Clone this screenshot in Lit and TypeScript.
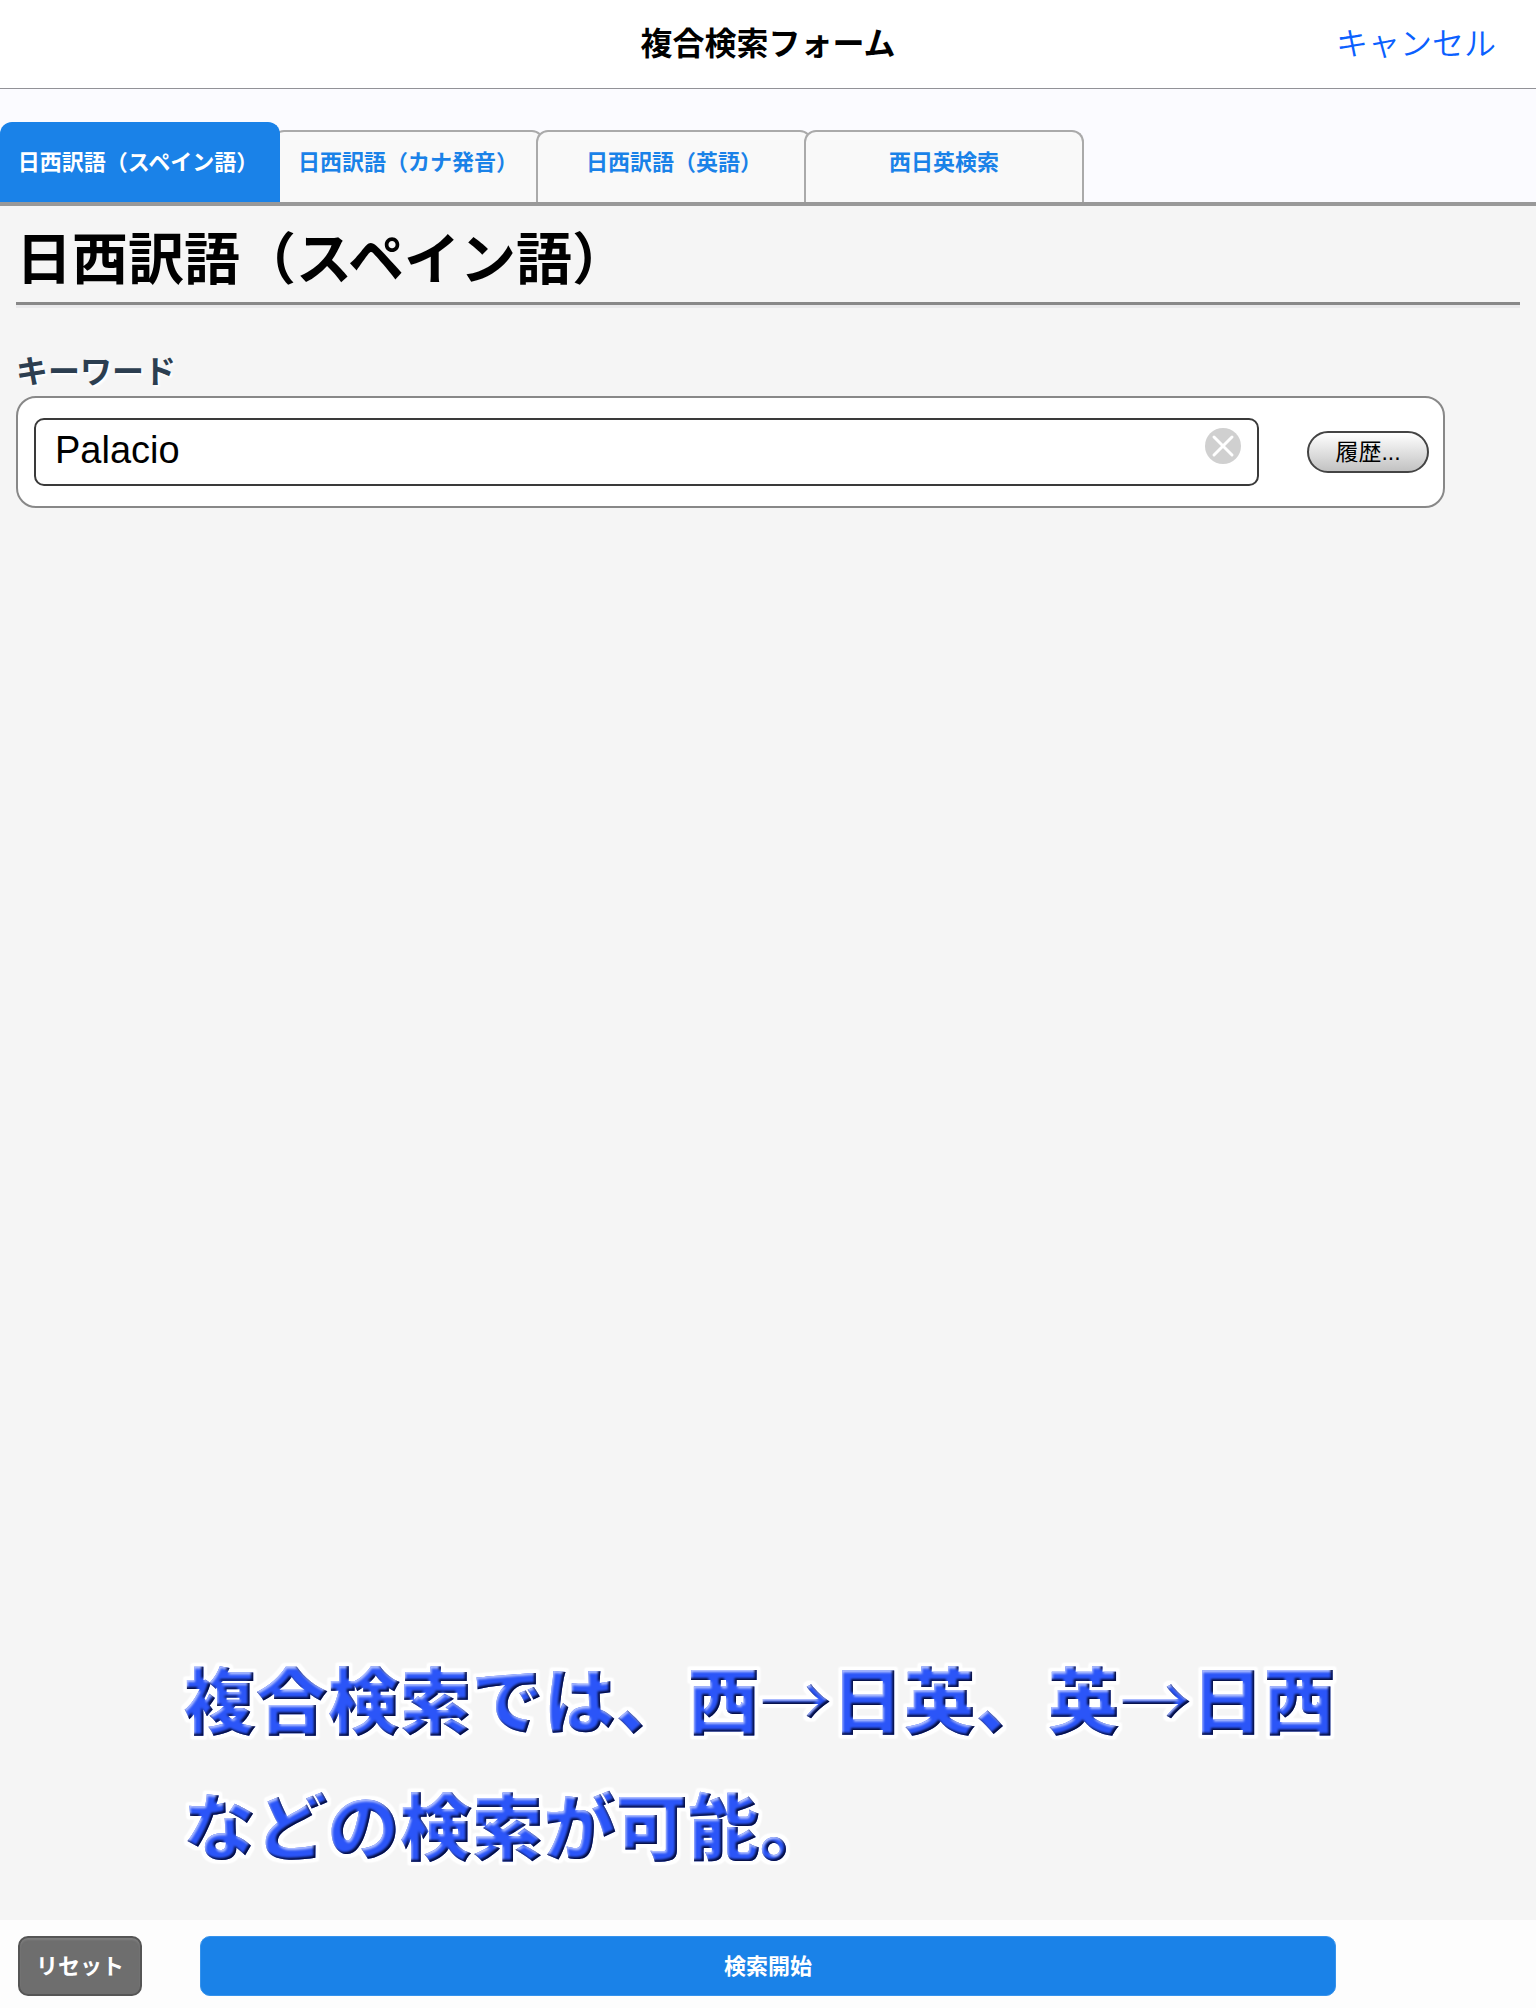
import { LitElement, html, css } from "lit";
import { customElement, state } from "lit/decorators.js";

interface Tab {
  label: string;
  size: string;
}

const TABS: Tab[] = [
  { label: "日西訳語（スペイン語）", size: "first" },
  { label: "日西訳語（カナ発音）", size: "second" },
  { label: "日西訳語（英語）", size: "third" },
  { label: "西日英検索", size: "fourth" },
];

@customElement("app-root")
export class AppRoot extends LitElement {
  @state() private active = 0;
  @state() private keyword = "Palacio";

  static styles = css`
    :host {
      display: flex;
      flex-direction: column;
      min-height: 100vh;
      background: #f5f5f5;
      color: #000;
      font-family: "Liberation Sans", "Noto Sans CJK JP", sans-serif;
    }
    * {
      box-sizing: border-box;
    }
    button {
      font-family: inherit;
      margin: 0;
      cursor: pointer;
    }
    .bar {
      display: grid;
      grid-template-columns: 1fr auto 1fr;
      align-items: center;
      height: 89px;
      padding: 0 40px;
      background: #fff;
      border-bottom: 1px solid #929297;
    }
    .bar-title {
      grid-column: 2;
      margin: 0;
      font-size: 32px;
      line-height: 48px;
      font-weight: 600;
    }
    .cancel {
      justify-self: end;
      padding: 0;
      border: 0;
      background: none;
      color: #0a60ff;
      font-size: 32px;
      line-height: 48px;
      font-weight: 350;
    }
    .tabs {
      display: flex;
      align-items: flex-end;
      height: 117px;
      background: #fbfbff;
      border-bottom: 4px solid #999;
    }
    .tab {
      height: 72px;
      margin-left: -8px;
      padding: 0 0 8px;
      border: 2px solid #aaa;
      border-bottom: 0;
      border-radius: 12px 12px 0 0;
      background: #f9f9f9;
      color: #1a82e8;
      font-size: 22px;
      line-height: 32px;
      font-weight: 600;
      white-space: nowrap;
    }
    .tab.first {
      width: 280px;
      margin-left: 0;
      padding-right: 4px;
    }
    .tab.second {
      width: 272px;
    }
    .tab.third {
      width: 276px;
    }
    .tab.fourth {
      width: 280px;
    }
    .tab.active {
      position: relative;
      height: 80px;
      padding-bottom: 0;
      border-color: #1a82e8;
      background: #1a82e8;
      color: #fff;
    }
    .content {
      flex: 1;
      display: flex;
      flex-direction: column;
      padding: 10px 16px 28px;
    }
    .heading {
      margin: 0;
      height: 89px;
      border-bottom: 3px solid #888;
      box-shadow: 0 3px 0 #e9e9eb;
      font-size: 56px;
      line-height: 88px;
      font-weight: 600;
    }
    .label {
      margin-top: 43px;
      font-size: 32px;
      line-height: 48px;
      font-weight: 600;
      color: #2c3e50;
      text-shadow: 2px 2px 2px #fff;
    }
    .field {
      display: flex;
      align-items: center;
      gap: 48px;
      height: 112px;
      margin-right: 75px;
      padding: 0 14px 0 16px;
      border: 2px solid #888;
      border-radius: 20px;
      background: #fff;
    }
    .entry {
      position: relative;
      flex: 1;
      display: flex;
    }
    .input {
      flex: 1;
      min-width: 0;
      height: 68px;
      padding: 0 64px 4px 19px;
      border: 2px solid #3a3a3a;
      border-radius: 10px;
      background: #fff;
      color: #000;
      font-family: "Liberation Sans", "Noto Sans CJK JP", sans-serif;
      font-size: 38px;
      outline: none;
    }
    .clear {
      position: absolute;
      top: 10px;
      right: 18px;
      width: 36px;
      height: 36px;
      padding: 0;
      border: 0;
      background: none;
    }
    .clear svg {
      display: block;
    }
    .history {
      width: 122px;
      height: 42px;
      padding: 0;
      border: 2px solid #444;
      border-radius: 21px;
      background: linear-gradient(#fff, #c2c2c2);
      color: #000;
      font-size: 23px;
      line-height: 32px;
    }
    .caption {
      margin: auto 0 0;
      padding: 0 168px;
      color: #2b55f8;
      font-size: 72px;
      line-height: 126px;
      font-weight: 900;
      filter: url(#bevel);
    }
    .arrow {
      font-family: "Noto Sans CJK JP", sans-serif;
      font-weight: 400;
    }
    .defs {
      position: absolute;
      width: 0;
      height: 0;
    }
    .footer {
      display: grid;
      grid-template-columns: 182px 1fr 182px;
      align-items: center;
      height: 88px;
      padding: 4px 18px 0;
      background: #fdfdfd;
    }
    .reset,
    .submit {
      height: 60px;
      padding: 2px 0 0;
      border-radius: 10px;
      color: #fff;
      font-size: 22px;
      line-height: 32px;
      font-weight: 600;
    }
    .reset {
      width: 124px;
      border: 2px solid #555;
      background: #6e6e6e;
      box-shadow: inset 0 2px 2px #7e7e7e;
    }
    .submit {
      border: 1px solid #3592ec;
      background: #1a82e8;
    }
  `;

  render() {
    return html`
      <header class="bar">
        <h1 class="bar-title">複合検索フォーム</h1>
        <button class="cancel" type="button">キャンセル</button>
      </header>
      <div class="tabs" role="tablist">
        ${TABS.map(
          (tab, i) => html`<button
            class="tab ${tab.size} ${i === this.active ? "active" : ""}"
            type="button"
            role="tab"
            aria-selected=${i === this.active ? "true" : "false"}
            @click=${() => (this.active = i)}
          >${tab.label}</button>`
        )}
      </div>
      <main class="content">
        <h2 class="heading">${TABS[this.active].label}</h2>
        <label class="label" for="keyword">キーワード</label>
        <div class="field">
          <div class="entry">
            <input
              class="input"
              id="keyword"
              type="text"
              .value=${this.keyword}
              @input=${(e: Event) => (this.keyword = (e.target as HTMLInputElement).value)}
            />
            <button class="clear" type="button" aria-label="消去" @click=${() => (this.keyword = "")}>
              <svg width="36" height="36" viewBox="0 0 36 36" aria-hidden="true">
                <circle cx="18" cy="18" r="18" fill="#d0d0d0" />
                <path d="M9 9L27 27M27 9L9 27" stroke="#fff" stroke-width="3" stroke-linecap="round" />
              </svg>
            </button>
          </div>
          <button class="history" type="button">履歴...</button>
        </div>
        <svg class="defs" aria-hidden="true">
          <filter id="bevel" x="0" y="0" width="100%" height="100%" color-interpolation-filters="sRGB">
            <feMorphology in="SourceAlpha" operator="dilate" radius="3" result="grown" />
            <feGaussianBlur in="grown" stdDeviation="1" result="soft" />
            <feFlood flood-color="#fff" />
            <feComposite in2="soft" operator="in" />
            <feComponentTransfer result="halo">
              <feFuncA type="linear" slope="2" />
            </feComponentTransfer>
            <feGaussianBlur in="SourceAlpha" stdDeviation="1" result="blurred" />
            <feOffset in="blurred" dx="1" dy="2" result="down" />
            <feFlood flood-color="#b4c2ff" />
            <feComposite in2="SourceAlpha" operator="in" />
            <feComposite in2="down" operator="out" result="light" />
            <feOffset in="blurred" dx="-2" dy="-2" result="up" />
            <feFlood flood-color="#040c3c" />
            <feComposite in2="SourceAlpha" operator="in" />
            <feComposite in2="up" operator="out" result="dark" />
            <feMerge>
              <feMergeNode in="halo" />
              <feMergeNode in="SourceGraphic" />
              <feMergeNode in="light" />
              <feMergeNode in="dark" />
            </feMerge>
          </filter>
        </svg>
        <p class="caption">複合検索では、西<span class="arrow">→</span>日英、英<span class="arrow">→</span>日西<br />などの検索が可能。</p>
      </main>
      <footer class="footer">
        <button class="reset" type="button">リセット</button>
        <button class="submit" type="button">検索開始</button>
      </footer>
    `;
  }
}
